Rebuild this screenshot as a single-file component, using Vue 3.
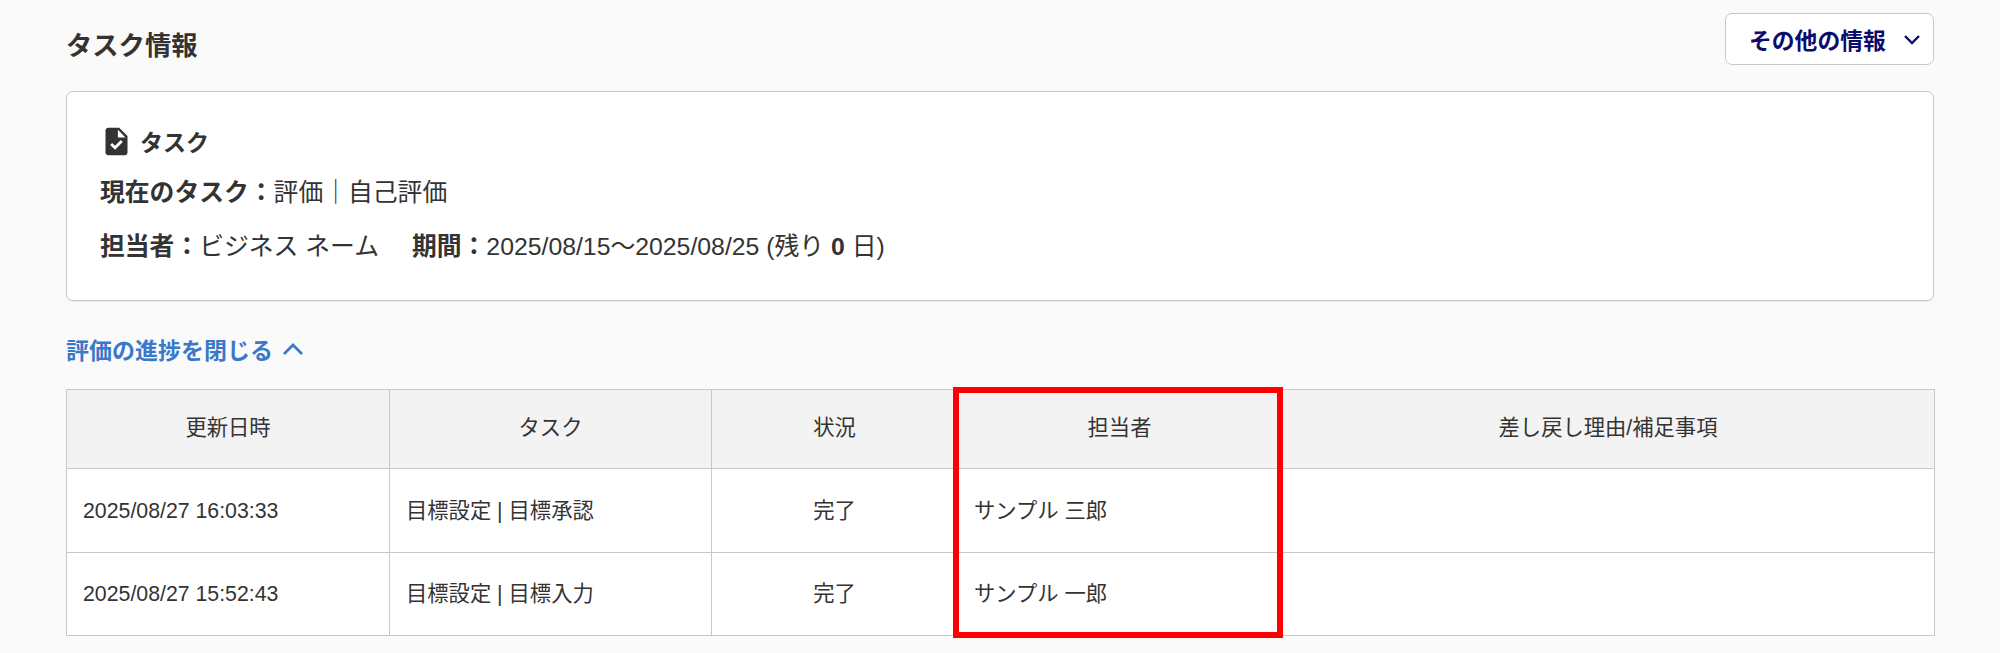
<script setup>
const columns = [
  { label: '更新日時', width: 323 },
  { label: 'タスク', width: 322 },
  { label: '状況', width: 246 },
  { label: '担当者', width: 324 },
  { label: '差し戻し理由/補足事項', width: 653 },
]

const rows = [
  { id: 1, updatedAt: '2025/08/27 16:03:33', task: '目標設定 | 目標承認', status: '完了', owner: 'サンプル 三郎' },
  { id: 2, updatedAt: '2025/08/27 15:52:43', task: '目標設定 | 目標入力', status: '完了', owner: 'サンプル 一郎' },
]
</script>

<template>
  <div class="page">
    <div class="page-head">
      <h2 class="page-title">タスク情報</h2>
      <button class="more-btn" type="button">
        <span>その他の情報</span>
        <svg class="more-chevron" viewBox="0 0 18 11" fill="none">
          <path d="M2 2l7 7 7-7" stroke="currentColor" stroke-width="2.4" />
        </svg>
      </button>
    </div>

    <section class="task-card">
      <div class="task-title">
        <svg class="task-icon" viewBox="0 0 24 24">
          <path
            fill="#333"
            d="M14 2H6c-1.1 0-1.99.9-1.99 2L4 20c0 1.1.89 2 1.99 2H18c1.1 0 2-.9 2-2V8l-6-6zm-3.06 16L7.4 14.46l1.41-1.41 2.12 2.12 4.24-4.24 1.41 1.41L10.94 18zM13 9V3.5L18.5 9H13z"
          />
        </svg>
        <span>タスク</span>
      </div>
      <p class="task-line"><b>現在のタスク：</b>評価｜自己評価</p>
      <p class="task-line">
        <b>担当者：</b>ビジネス ネーム<b class="period-label">期間：</b>2025/08/15〜2025/08/25 (残り <b>0</b> 日)
      </p>
    </section>

    <a class="progress-toggle">
      <span>評価の進捗を閉じる</span>
      <svg class="toggle-chevron" viewBox="0 0 22 13" fill="none">
        <path d="M2 11l9-9 9 9" stroke="currentColor" stroke-width="2.8" />
      </svg>
    </a>

    <div class="table-wrap">
      <table class="progress-table">
        <colgroup>
          <col v-for="c in columns" :key="c.label" :style="{ width: c.width + 'px' }" />
        </colgroup>
        <thead>
          <tr>
            <th v-for="c in columns" :key="c.label">{{ c.label }}</th>
          </tr>
        </thead>
        <tbody>
          <tr v-for="r in rows" :key="r.id">
            <td>{{ r.updatedAt }}</td>
            <td>{{ r.task }}</td>
            <td class="center">{{ r.status }}</td>
            <td>{{ r.owner }}</td>
            <td></td>
          </tr>
        </tbody>
      </table>
      <!-- annotation over the owner column -->
      <div class="highlight"></div>
    </div>
  </div>
</template>

<style>
html,
body {
  margin: 0;
  background: #fafafa;
}
</style>

<style scoped>
.page {
  box-sizing: border-box;
  width: 2000px;
  height: 653px;
  padding: 13px 66px 0;
  overflow: hidden;
  background: #fafafa;
  color: #333;
  font-family: "Liberation Sans", "Noto Sans CJK JP", sans-serif;
  font-size: 24.8px;
}

.page-head {
  display: flex;
  align-items: center;
  justify-content: space-between;
  height: 52px;
}

.page-title {
  margin: 0;
  font-size: 26.3px;
  font-weight: 700;
  line-height: 1;
  position: relative;
  top: 7px;
}

.more-btn {
  display: flex;
  align-items: center;
  justify-content: space-between;
  box-sizing: border-box;
  width: 209px;
  height: 52px;
  padding: 0 12px 0 23px;
  border: 1px solid #c8c8c8;
  border-radius: 7px;
  background: #fff;
  color: #0b0b6b;
  font-family: inherit;
  font-size: 22.8px;
  font-weight: 700;
}

.more-chevron {
  width: 18px;
  height: 11px;
}

.task-card {
  box-sizing: border-box;
  height: 210px;
  margin-top: 26px;
  padding: 32px 33px 0;
  border: 1px solid #c8c8c8;
  border-radius: 7px;
  background: #fff;
  box-shadow: 0 1px 1px rgba(0, 0, 0, 0.06);
}

.task-title {
  display: flex;
  align-items: center;
  gap: 7px;
  height: 34px;
  margin-bottom: 8px;
  font-size: 23px;
  font-weight: 700;
}

.task-icon {
  width: 33px;
  height: 33px;
  flex-shrink: 0;
}

.task-line {
  margin: 0;
  height: 54px;
  line-height: 54px;
  white-space: nowrap;
}

.period-label {
  margin-left: 33px;
}

.progress-toggle {
  display: flex;
  align-items: center;
  gap: 9px;
  margin-top: 32px;
  height: 32px;
  color: #3a78c8;
  font-size: 23px;
  font-weight: 700;
}

.toggle-chevron {
  width: 22px;
  height: 13px;
}

.table-wrap {
  position: relative;
  margin-top: 24px;
}

.progress-table {
  width: 1868px;
  table-layout: fixed;
  border-collapse: collapse;
  background: #fff;
  font-size: 21.3px;
  line-height: 30px;
}

.progress-table th,
.progress-table td {
  border: 1px solid #c8c8c8;
  padding: 0 16px;
  white-space: nowrap;
}

.progress-table th {
  height: 79px;
  padding-bottom: 3px;
  box-sizing: border-box;
  background: #f3f3f3;
  font-weight: 400;
  text-align: center;
}

.progress-table td {
  height: 84px;
  box-sizing: border-box;
  text-align: left;
}

.progress-table tr:last-child td {
  height: 83px;
}

.progress-table td.center {
  text-align: center;
}

.highlight {
  position: absolute;
  top: -2px;
  left: 887px;
  width: 330px;
  height: 251px;
  box-sizing: border-box;
  border: 6px solid #f00;
  pointer-events: none;
}
</style>
